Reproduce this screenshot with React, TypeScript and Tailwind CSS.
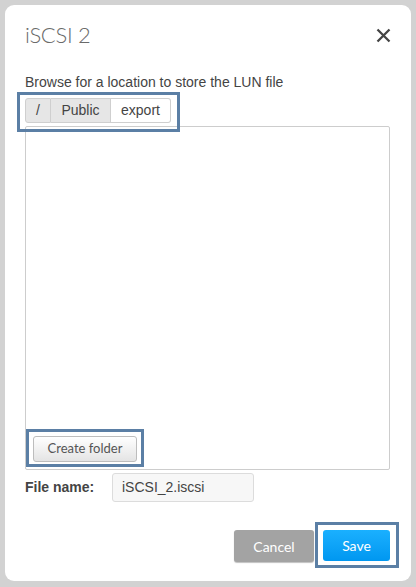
import React from "react";

export default function App() {
  return (
    <div className="w-[416px] h-[587px] bg-[#d2d2d2] p-[5px] pb-[6px]" style={{ fontFamily: "'Liberation Sans', Arial, sans-serif" }}>
      <div className="h-full bg-white rounded-[9px] pl-5 pr-[21px] pt-[17px] flex flex-col">
        <div className="flex items-start justify-between">
          <div className="text-[22px] leading-[26px] text-[#6a6a6a] font-light tracking-[-0.3px]" style={{ fontFamily: "Lato, sans-serif" }}>
            iSCSI 2
          </div>
          <svg width="15" height="15" viewBox="0 0 15 15" className="mt-[6px] -mr-[1px]">
            <path d="M1.5 1.5 L13.5 13.5 M13.5 1.5 L1.5 13.5" stroke="#444" strokeWidth="2.3" strokeLinecap="butt" />
          </svg>
        </div>

        <div className="mt-[26px] text-[14px] leading-[16px] text-[#444]">Browse for a location to store the LUN file</div>

        <div className="relative mt-[8px] self-start">
          <div className="flex h-[25px] text-[14px] text-[#444]">
            <div className="w-[26px] flex items-center justify-center bg-[#e6e6e6] border border-[#cfcfcf] rounded-l-[3px]">/</div>
            <div className="w-[60px] flex items-center justify-center bg-[#e6e6e6] border border-l-0 border-[#cfcfcf]">Public</div>
            <div className="w-[60px] flex items-center justify-center bg-white border border-l-0 border-[#cfcfcf] rounded-r-[3px]">export</div>
          </div>
          <div className="absolute -left-[8px] -top-[6px] -right-[9px] -bottom-[9px] border-[3px] border-[#5b7fa5] z-10 pointer-events-none" />
        </div>

        <div className="mt-[3px] h-[344px] border border-[#cdcdcd] rounded-[2px] flex flex-col justify-end pl-[7px] pb-[7px]">
          <div className="relative self-start">
            <div
              className="w-[104px] h-[26px] flex items-center justify-center rounded-[3px] border border-[#bdbdbd] bg-gradient-to-b from-white to-[#e4e4e4] text-[13px] text-[#555]"
              style={{ fontFamily: "Lato, sans-serif" }}
            >
              Create folder
            </div>
            <div className="absolute -left-[7px] -top-[7px] -right-[7px] -bottom-[5px] border-[3px] border-[#5b7fa5] pointer-events-none" />
          </div>
        </div>

        <div className="mt-[3px] flex items-center">
          <div className="w-[87px] text-[14px] font-bold text-[#444]">File name:</div>
          <div className="w-[142px] h-[29px] flex items-center pl-[9px] bg-[#f7f7f7] border border-[#dcdcdc] rounded-[3px] text-[14px] text-[#444]">
            iSCSI_2.iscsi
          </div>
        </div>

        <div className="mt-[28px] flex justify-end items-start" style={{ fontFamily: "Lato, sans-serif" }}>
          <div className="w-[80px] h-[32px] flex items-center justify-center rounded-[3px] bg-[#a3a3a3] text-white text-[14px] shadow-[0_1px_1px_rgba(0,0,0,0.25)]">
            Cancel
          </div>
          <div className="relative ml-[9px]">
            <div className="w-[67px] h-[31px] flex items-center justify-center rounded-[3px] bg-gradient-to-b from-[#1ab0ff] to-[#0097f0] text-white text-[14px]">
              Save
            </div>
            <div className="absolute -left-[8px] -top-[8px] -right-[9px] -bottom-[7px] border-[3px] border-[#5b7fa5] pointer-events-none" />
          </div>
        </div>
      </div>
    </div>
  );
}
